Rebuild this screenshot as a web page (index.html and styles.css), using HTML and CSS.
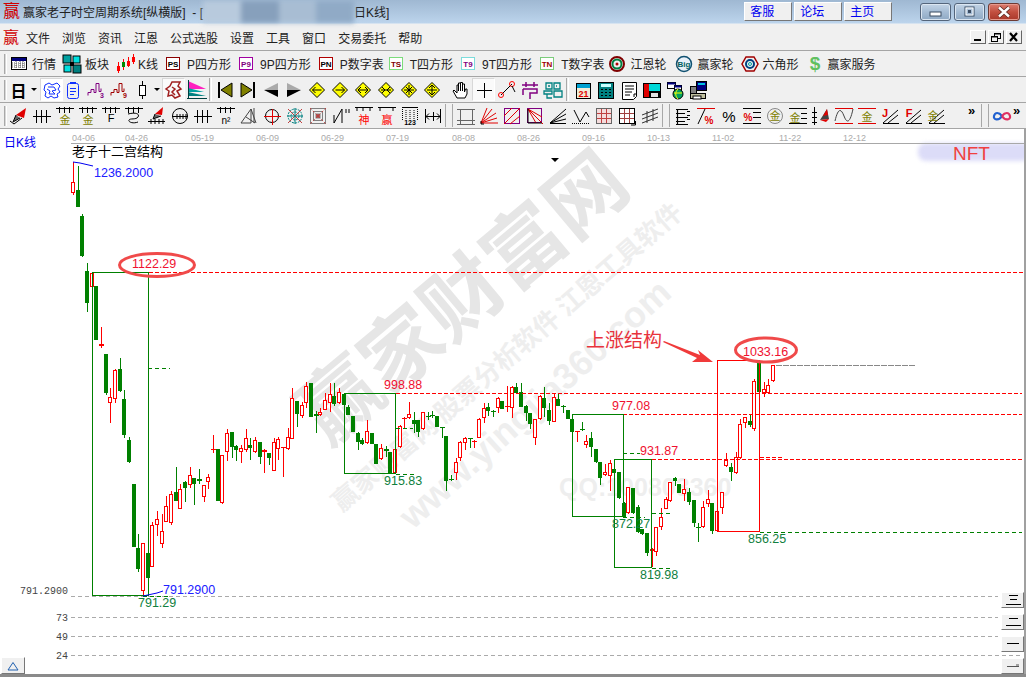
FILE: index.html
```html
<!DOCTYPE html>
<html lang="zh">
<head>
<meta charset="utf-8">
<title>赢家老子时空周期系统</title>
<link rel="stylesheet" href="styles.css">
<script src="chart.js" defer></script>
</head>
<body>
<div class="app">
  <header class="titlebar">
    <span class="logo">赢</span>
    <span class="title">赢家老子时空周期系统[纵横版]  - [</span>
    <span class="blurred"><i class="b1"></i><i class="b2"></i><i class="b3"></i><i class="b4"></i></span>
    <span class="title">日K线]</span>
    <nav class="links"><a class="link">客服</a><a class="link">论坛</a><a class="link">主页</a></nav>
    <div class="winctl">
      <span class="wbtn"><svg width="14" height="10" viewBox="0 0 14 10"><rect x="1" y="5" width="11" height="4" fill="#fff" stroke="#3b4d63"/></svg></span>
      <span class="wbtn"><svg width="14" height="12" viewBox="0 0 14 12"><rect x="2" y="1" width="9" height="9" fill="none" stroke="#3b4d63"/><rect x="3" y="2" width="7" height="7" fill="none" stroke="#fff"/><rect x="5" y="4" width="3" height="3" fill="#3b4d63"/></svg></span>
      <span class="wbtn close"><svg width="16" height="12" viewBox="0 0 16 12"><path d="M3 1.500 13 10.500M13 1.500 3 10.500" stroke="#5a2a22" stroke-width="4"/><path d="M3 1.500 13 10.500M13 1.500 3 10.500" stroke="#fff" stroke-width="2.400"/></svg></span>
    </div>
  </header>

  <div class="menubar">
    <span class="logo small">赢</span>
    <span class="mi">文件</span><span class="mi">浏览</span><span class="mi">资讯</span><span class="mi">江恩</span><span class="mi">公式选股</span><span class="mi">设置</span><span class="mi">工具</span><span class="mi">窗口</span><span class="mi">交易委托</span><span class="mi">帮助</span>
    <div class="mdi">
      <span class="mbtn"><svg width="12" height="10" viewBox="0 0 12 10"><rect x="2" y="7" width="7" height="2"/></svg></span>
      <span class="mbtn"><svg width="12" height="11" viewBox="0 0 12 11" fill="none" stroke="#000"><rect x="4.500" y="1.500" width="6" height="5"/><rect x="1.500" y="4.500" width="6" height="5" fill="#f0f0f0"/><path d="M4 2h7M1 5h7"/></svg></span>
      <span class="mbtn"><svg width="12" height="10" viewBox="0 0 12 10"><path d="M2 1 9 9M9 1 2 9" stroke="#000" stroke-width="2.200"/></svg></span>
    </div>
  </div>

  <div class="toolbar t1">
    <i class="grip"></i>
    <span class="ti"><svg class="ic" viewBox="0 0 20 20"><rect x="2.500" y="3.500" width="15" height="12" fill="#fff" stroke="#000"/><rect x="3" y="4" width="14" height="3" fill="#00007f"/><path d="M3 9h14M3 11h14M3 13h14M7 7v8M11 7v8M14 7v8" stroke="#555" stroke-dasharray="1 1"/></svg><b>行情</b></span>
    <span class="ti"><svg class="ic" viewBox="0 0 20 20"><rect x="1" y="1" width="8" height="8" fill="#00a0a0" stroke="#000"/><rect x="11" y="2" width="7" height="7" fill="#00e0e0" stroke="#000"/><rect x="2" y="11" width="7" height="7" fill="#00e0e0" stroke="#000"/><rect x="11" y="11" width="8" height="8" fill="#007f7f" stroke="#000"/><rect x="8" y="8" width="4" height="4" fill="#000"/></svg><b>板块</b></span>
    <span class="ti"><svg class="ic" viewBox="0 0 20 20" shape-rendering="crispEdges"><path d="M3 8v11M8 5v11M13 3v10M18 0v10" stroke="#f00"/><rect x="1.500" y="11.500" width="3" height="5" fill="#f00"/><rect x="6.500" y="7.500" width="3" height="5" fill="#080"/><rect x="11.500" y="6.500" width="3" height="5" fill="#f00"/><rect x="16.500" y="2.500" width="3" height="5" fill="#f00"/></svg><b>K线</b></span>
    <span class="ti"><svg class="ic" viewBox="0 0 20 20"><rect x="2.500" y="3.500" width="13" height="12" fill="#fff" stroke="#8b0000"/><text x="9" y="13" class="it8" fill="#000">PS</text></svg><b>P四方形</b></span>
    <span class="ti"><svg class="ic" viewBox="0 0 20 20"><rect x="2.500" y="3.500" width="13" height="12" fill="#fff" stroke="#a000a0"/><text x="9" y="13" class="it8" fill="#800080">P9</text></svg><b>9P四方形</b></span>
    <span class="ti tight"><svg class="ic" viewBox="0 0 20 20"><rect x="2.500" y="3.500" width="13" height="12" fill="#fff" stroke="#b00000"/><text x="9" y="13" class="it8" fill="#000">PN</text></svg><b>P数字表</b></span>
    <span class="ti"><svg class="ic" viewBox="0 0 20 20"><rect x="2.500" y="3.500" width="13" height="12" fill="#fff" stroke="#00c000" stroke-dasharray="1 1"/><text x="9" y="13" class="it8" fill="#800000">TS</text></svg><b>T四方形</b></span>
    <span class="ti"><svg class="ic" viewBox="0 0 20 20"><rect x="2.500" y="3.500" width="13" height="12" fill="#fff" stroke="#00c0c0" stroke-dasharray="1 1"/><text x="9" y="13" class="it8" fill="#800080">T9</text></svg><b>9T四方形</b></span>
    <span class="ti tight"><svg class="ic" viewBox="0 0 20 20"><rect x="2.500" y="3.500" width="13" height="12" fill="#fff" stroke="#00a000" stroke-dasharray="1 1"/><text x="9" y="13" class="it8" fill="#a00000">TN</text></svg><b>T数字表</b></span>
    <span class="ti wide"><svg class="ic" viewBox="0 0 20 20" fill="none"><circle cx="10" cy="10" r="7" stroke="#7f0000" stroke-width="2"/><circle cx="10" cy="10" r="4.500" stroke="#007f40" stroke-width="2"/><circle cx="10" cy="10" r="1.500" fill="#b00000"/></svg><b>江恩轮</b></span>
    <span class="ti"><svg class="ic" viewBox="0 0 20 20"><circle cx="10" cy="10" r="7.500" fill="#e8f0f8" stroke="#105070" stroke-width="1.500"/><text x="10" y="13" class="it8" fill="#006060">Big</text></svg><b>赢家轮</b></span>
    <span class="ti"><svg class="ic" viewBox="0 0 20 20" fill="none"><path d="M6 3h8l4 7-4 7H6l-4-7z" stroke="#a00000" stroke-width="1.500"/><circle cx="10" cy="10" r="4" stroke="#004080" stroke-width="2"/><circle cx="10" cy="10" r="1.500" stroke="#00a0a0"/></svg><b>六角形</b></span>
    <span class="ti"><svg class="ic" viewBox="0 0 20 20"><text x="10" y="16" class="itd" fill="#60c060">$</text></svg><b>赢家服务</b></span>
  </div>

  <div class="toolbar t2">
    <i class="grip"></i>
    <span class="slot narrow"><b class="ri">日</b></span><span class="drop"></span>
    <span class="slot on pull"><svg class="ic" viewBox="0 0 20 20" fill="none" stroke="#1030ff"><path d="M3 5 7 3l3 2 5-2 3 3-2 3 2 3-3 2 1 3-4 1-3-2-3 2-3-2 1-4-2-2z"/><path d="M6 7h6l2 3-4 1 3 3H7l1-3-3-2"/></svg></span>
    <span class="slot"><svg class="ic" viewBox="0 0 20 20" fill="none" stroke="#1030ff"><rect x="4.500" y="3.500" width="11" height="15" rx="2"/><path d="M7 2.500h6M7 8.500h6M7 11.500h6M7 14.500h4"/></svg></span>
    <span class="slot"><svg class="ic" viewBox="0 0 20 20" fill="none" stroke="#800080"><path d="M2 15.500v-3h3v-3h3v3h2v-9h3v8h2v-3"/><text x="16" y="18" class="it6" fill="#800080" stroke="none">3</text></svg></span>
    <span class="slot"><svg class="ic" viewBox="0 0 20 20" fill="none" stroke="#a00000"><path d="M2 15.500v-3h3v-3h3v3h2v-9h3v8h2v-3"/><text x="16" y="18" class="it6" fill="#a00000" stroke="none">9</text></svg></span>
    <span class="slot"><svg class="ic" viewBox="0 0 20 20" fill="none" stroke="#000"><path d="M10.500 1v18"/><rect x="7.500" y="5.500" width="6" height="10" fill="#fff"/></svg></span><span class="drop small"></span>
    <span class="slot on2"><svg class="ic" viewBox="0 0 20 20" fill="none" stroke="#a02020" stroke-width="1.500"><path d="M8 2h8l-2 4 3 3-4 2 3 5-5 2-3-3-4 1 1-5-3-2 4-3z"/><path d="M8 7l3 2-3 3 3 3"/></svg></span>
    <span class="slot"><svg class="ic" viewBox="0 0 20 20"><path d="M1 1 19 9H1z" fill="#ff20c0"/><path d="M1 8 17 12H1z" fill="#00a0a0"/><path d="M1 12 19 16H1z" fill="#008080"/><path d="M1.500 0v19M0 18.500h20" stroke="#004040"/></svg></span>
    <i class="sep s1"></i>
    <span class="slot"><svg class="ic" viewBox="0 0 20 20"><path d="M17 3v14L6 10z" fill="#808000" stroke="#000"/><rect x="3" y="2" width="2" height="16"/></svg></span>
    <span class="slot"><svg class="ic" viewBox="0 0 20 20"><path d="M3 3v14l11-7z" fill="#808000" stroke="#000"/><rect x="15" y="2" width="2" height="16"/></svg></span>
    <span class="slot"><svg class="ic" viewBox="0 0 20 20"><path d="M17 3v7H3z" fill="#aaa"/><path d="M17 17v-7H3z"/></svg></span>
    <span class="slot"><svg class="ic" viewBox="0 0 20 20"><path d="M3 3v7h14z" fill="#aaa"/><path d="M3 17v-7h14z"/></svg></span>
    <span class="slot"><svg class="ic" viewBox="0 0 20 20"><path d="M10 2.500 17.500 10 10 17.500 2.500 10z" fill="#ff0" stroke="#000"/><path d="M5.500 10h9M5.500 10l3-3M5.500 10l3 3" fill="none" stroke="#000"/></svg></span>
    <span class="slot"><svg class="ic" viewBox="0 0 20 20"><path d="M10 2.500 17.500 10 10 17.500 2.500 10z" fill="#ff0" stroke="#000"/><path d="M5.500 10h9M14.500 10l-3-3M14.500 10l-3 3" fill="none" stroke="#000"/></svg></span>
    <span class="slot"><svg class="ic" viewBox="0 0 20 20"><path d="M10 2.500 17.500 10 10 17.500 2.500 10z" fill="#ff0" stroke="#000"/><path d="M5 10h10M5 10l3-3M5 10l3 3M15 10l-3-3M15 10l-3 3" fill="none" stroke="#000"/></svg></span>
    <span class="slot"><svg class="ic" viewBox="0 0 20 20"><path d="M10 2.500 17.500 10 10 17.500 2.500 10z" fill="#ff0" stroke="#000"/><path d="M5 10h10M9 10l-3-3M9 10l-3 3M11 10l3-3M11 10l3 3" fill="none" stroke="#000"/></svg></span>
    <span class="slot"><svg class="ic" viewBox="0 0 20 20"><path d="M10 2.500 17.500 10 10 17.500 2.500 10z" fill="#ff0" stroke="#000"/><path d="M5 10h10M10 5v10M7 7l6 6M13 7l-6 6" fill="none" stroke="#000"/></svg></span>
    <span class="slot"><svg class="ic" viewBox="0 0 20 20"><path d="M10 2.500 17.500 10 10 17.500 2.500 10z" fill="#ff0" stroke="#000"/><path d="M5 10h10M10 5v10M10 5l-3 3M10 5l3 3M10 15l-3-3M10 15l3-3" fill="none" stroke="#000"/></svg></span>
    <i class="gap6"></i>
    <span class="slot"><svg class="ic" viewBox="0 0 20 20" fill="#fff" stroke="#000"><path d="M6 18 2 11l1-1 3 3V5h1.500v6V3h2v8V2.500h2V11V4h2v8l1-3h1.500v5l-2 4z"/></svg></span>
    <span class="slot on3"><svg class="ic" viewBox="0 0 20 20"><path d="M10.500 3v15M3 10.500h15" stroke="#000"/></svg></span>
    <span class="slot"><svg class="ic" viewBox="0 0 20 20" fill="none"><path d="M4 15 15 4" stroke="#000"/><circle cx="4" cy="15" r="2.500" stroke="#f00"/><circle cx="15" cy="4" r="2.500" stroke="#f00"/><path d="M15 6l3 6" stroke="#000"/></svg></span>
    <span class="slot"><svg class="ic" viewBox="0 0 20 20" fill="none" stroke="#800080" stroke-width="1.500"><path d="M6 2v5M14 2v5M2 5h16M3 9h14v4h-7v6M3 9v6"/></svg></span>
    <span class="slot"><svg class="ic" viewBox="0 0 20 20" fill="none" stroke="#008080" stroke-width="1.300"><path d="M3 3h6v6H3zM11 3h6v6h-6zM1 11h8v3H1zM11 11h8v6h-8zM4 14v4h5M7 6h-2M14 6h-1"/></svg></span>
    <i class="sep s2"></i>
    <span class="slot"><svg class="ic" viewBox="0 0 20 20"><rect x="3.500" y="3.500" width="14" height="15" fill="#f0ecd8" stroke="#000"/><rect x="4" y="4" width="13" height="4" fill="#00a0d0"/><text x="10.500" y="17" class="it9" fill="#e00000">21</text></svg></span>
    <span class="slot"><svg class="ic" viewBox="0 0 20 20"><rect x="2.500" y="2.500" width="15" height="16" fill="#008080" stroke="#000"/><rect x="5" y="4" width="10" height="3" fill="#c8ffff"/><path d="M5 9.500h2M9 9.500h2M13 9.500h2M5 12.500h2M9 12.500h2M13 12.500h2M5 15.500h2M9 15.500h2M13 15.500h2" stroke="#000"/></svg></span>
    <span class="slot"><svg class="ic" viewBox="0 0 20 20" fill="none" stroke="#000"><path d="M3.500 2.500h14v14l-3 3h-11z" fill="#fff"/><path d="M6 6h9M6 9h9M6 12h7M6 15h5M15 17v-3h3" /></svg></span>
    <span class="slot"><svg class="ic" viewBox="0 0 20 20"><rect x="1" y="3" width="18" height="15" fill="#000"/><rect x="2" y="4" width="5" height="13" fill="#e00000"/><rect x="7" y="4" width="11" height="7" fill="#00d8d8"/><rect x="9" y="13" width="7" height="4" fill="#e0e0e0"/></svg></span>
    <span class="slot"><svg class="ic" viewBox="0 0 20 20"><rect x="2.500" y="2.500" width="8" height="6" fill="#fff" stroke="#000"/><rect x="2.500" y="2.500" width="8" height="2" fill="#00007f"/><rect x="9.500" y="5.500" width="7" height="5" fill="#fff" stroke="#000"/><rect x="9.500" y="5.500" width="7" height="2" fill="#00007f"/><circle cx="13" cy="14" r="5" fill="#00a060" stroke="#000"/><path d="M9 13h8M13 9c-3 3-3 7 0 10" fill="none" stroke="#ff0"/></svg></span>
    <span class="slot"><svg class="ic" viewBox="0 0 20 20"><rect x="8.500" y="1.500" width="10" height="9" fill="#00007f" stroke="#000"/><rect x="10" y="3" width="7" height="2" fill="#00c0e0"/><rect x="2.500" y="6.500" width="6" height="7" fill="#808080" stroke="#000"/><rect x="2.500" y="13.500" width="15" height="5" fill="#c0c0a0" stroke="#000"/><rect x="5" y="16" width="8" height="3" fill="#fff" stroke="#000"/></svg></span>
  </div>

  <div class="toolbar t3">
    <i class="grip"></i>
    <span class="slot"><svg class="ic" viewBox="0 0 20 20"><path d="M17 2 15 12 7 9z" fill="#e00000"/><path d="M7 9 4 16l7-4" fill="#666" stroke="#000"/><path d="M1 15l4 3 8-6" fill="none" stroke="#000"/></svg></span>
    <span class="slot"><svg class="ic" viewBox="0 0 20 20"><use href="#hash"/></svg></span>
    <span class="slot"><svg class="ic" viewBox="0 0 20 20"><use href="#ticks"/><text x="10" y="18" class="itk" fill="#808000">金</text></svg></span>
    <span class="slot"><svg class="ic" viewBox="0 0 20 20"><use href="#ticks"/><text x="10" y="18" class="itk" fill="#808000">金</text></svg></span>
    <span class="slot"><svg class="ic" viewBox="0 0 20 20"><use href="#ticks"/><text x="10" y="16" class="itk" fill="#000">F</text></svg></span>
    <span class="slot"><svg class="ic" viewBox="0 0 20 20"><use href="#ticks"/><path d="M4 8c8-2 12 0 10 3s-8 1-9 3 4 4 9 2" fill="none" stroke="#000"/></svg></span>
    <span class="slot"><svg class="ic" viewBox="0 0 20 20"><path d="M16 1 15 9 8 8z" fill="#e00000"/><path d="M8 8 6 13l8-3" fill="#666" stroke="#000"/><path d="M1 15.500h17M4 13v5M8 13v5M12 13v5M16 13v5" stroke="#000" fill="none"/></svg></span>
    <span class="slot"><svg class="ic" viewBox="0 0 20 20" fill="none" stroke="#000"><circle cx="10" cy="10" r="7.500"/><path d="M2 10.500h16M7 8v5M10 8v5M13 8v5M16 8v5"/></svg></span>
    <span class="slot"><svg class="ic" viewBox="0 0 20 20"><use href="#hash"/></svg></span>
    <span class="slot"><svg class="ic" viewBox="0 0 20 20"><use href="#ticks"/><text x="10" y="18" class="it10" fill="#000">n²</text></svg></span>
    <span class="slot"><svg class="ic" viewBox="0 0 20 20" fill="none" stroke="#444"><path d="M2 17 12 3v14zM7 11l9 6M12 3l5 14M15 2v15"/></svg></span>
    <span class="slot"><svg class="ic" viewBox="0 0 20 20" fill="none"><circle cx="10" cy="10" r="6.500" stroke="#000"/><path d="M2 10.500h17M10.500 3v16" stroke="#e00000"/></svg></span>
    <span class="slot"><svg class="ic" viewBox="0 0 20 20" fill="none" stroke="#008080"><circle cx="10" cy="10" r="7" stroke-dasharray="2 1"/><circle cx="10" cy="10" r="4" stroke-dasharray="2 1"/><path d="M3 3l14 14M17 3 3 17" stroke="#c04040"/><path d="M10 2v16M2 10h16"/></svg></span>
    <span class="slot"><svg class="ic" viewBox="0 0 20 20" fill="none" stroke="#808080"><rect x="2.500" y="2.500" width="15" height="15"/><rect x="5.500" y="5.500" width="9" height="9"/><rect x="8" y="8" width="4" height="4" fill="#c04040"/><path d="M2 2l16 16M18 2 2 18" stroke="#c04040" stroke-dasharray="2 2"/></svg></span>
    <span class="slot"><svg class="ic" viewBox="0 0 20 20" fill="none" stroke="#000"><path d="M3 17V9M3 17 11 3v14M15 3v4M18 3v4"/></svg></span>
    <span class="slot"><svg class="ic" viewBox="0 0 20 20"><path d="M1 1.500h18M3 1v4M9 1v4M16 1v4" stroke="#000"/><text x="10" y="18" class="itk" fill="#f00">神</text></svg></span>
    <span class="slot"><svg class="ic" viewBox="0 0 20 20"><path d="M1 1.500h18M3 1v4M16 1v4" stroke="#000"/><text x="10" y="18" class="itk" fill="#f00">赢</text></svg></span>
    <span class="slot"><svg class="ic" viewBox="0 0 20 20" fill="none" stroke="#000"><path d="M2.500 1v13M17.500 1v13M6 4v10M10 4v10M14 4v10" stroke-dasharray="1 1"/><path d="M2 1.500h16"/><text x="10" y="19" class="it6" fill="#000" stroke="none">123</text></svg></span>
    <span class="slot"><svg class="ic" viewBox="0 0 20 20" fill="none" stroke="#000"><path d="M2.500 3v14M17.500 3v14M3 10.500h14M3 10.500l3-3M3 10.500l3 3M17 10.500l-3-3M17 10.500l-3 3M10.500 6v9"/></svg></span>
    <i class="sep gripped"></i>
    <span class="slot"><svg class="ic" viewBox="0 0 20 20" fill="none" stroke="#666"><path d="M1 3.500h18M4.500 4v14M16.500 4v14M1 14.500h18M1 18.500h18"/></svg></span>
    <span class="slot"><svg class="ic" viewBox="0 0 20 20" fill="none" stroke="#e00000"><path d="M2 17 8 2M2 17 13 3M2 17 17 7M2 17l16-5M2 17h17"/><path d="M2 15v3h3" stroke="#000"/></svg></span>
    <span class="slot"><svg class="ic" viewBox="0 0 20 20" fill="none"><rect x="2.500" y="2.500" width="15" height="15" stroke="#800080"/><path d="M2 18 18 2M8 18l10-8M2 10 10 2" stroke="#e00000"/></svg></span>
    <span class="slot"><svg class="ic" viewBox="0 0 20 20" fill="none"><rect x="2.500" y="2.500" width="14" height="14" stroke="#800080"/><path d="M3 3 18 18M3 3l14 8M3 3l8 14M3 3l12 12" stroke="#e00000"/><path d="M3 3v14h14" stroke="#000"/></svg></span>
    <span class="slot"><svg class="ic" viewBox="0 0 20 20" fill="none" stroke="#000"><path d="M2 17 18 3M2 17 18 8M2 17 18 13M2 17.500h16"/></svg></span>
    <span class="slot"><svg class="ic" viewBox="0 0 20 20" fill="none" stroke="#000"><path d="M3 4l6 12 6-10 3 5"/><path d="M1 17.500h18" stroke-dasharray="1 1"/></svg></span>
    <span class="slot"><svg class="ic" viewBox="0 0 20 20"><rect x="2.500" y="2.500" width="15" height="15" fill="#f4dcdc" stroke="#666"/><path d="M7.500 3v14M12.500 3v14M3 7.500h14M3 12.500h14" stroke="#c04040"/></svg></span>
    <span class="slot"><svg class="ic" viewBox="0 0 20 20"><rect x="2.500" y="2.500" width="15" height="15" fill="#fff" stroke="#000"/><path d="M7.500 3v14M12.500 3v14M3 7.500h14M3 12.500h14" stroke="#a04040"/><path d="M18.500 15v4H14" fill="none" stroke="#000"/></svg></span>
    <span class="slot"><svg class="ic" viewBox="0 0 20 20" fill="none" stroke="#333"><path d="M2 9 18 3M2 13 18 7M2 17 18 11M7 5v12M13 3v12"/></svg></span>
    <i class="sep gripped"></i>
    <span class="slot"><svg class="ic" viewBox="0 0 20 20" fill="none" stroke="#000"><path d="M4.500 3v15M3 3.500h12M3 7.500h9M3 11.500h12M3 15.500h9M3 18.500h12M14 5.500h3M14 9.500h3M14 13.500h3" stroke-width="1.200"/></svg></span>
    <span class="slot"><svg class="ic" viewBox="0 0 20 20"><path d="M1 2.500h18" stroke="#e00000"/><path d="M2 18 9 3" stroke="#000" fill="none"/><text x="13" y="18" class="itp" fill="#e00000">%</text></svg></span>
    <span class="slot"><svg class="ic" viewBox="0 0 20 20"><text x="10" y="16" class="itq" fill="#000">%</text></svg></span>
    <span class="slot"><svg class="ic" viewBox="0 0 20 20"><path d="M1 2.500h18M11 6.500h8M11 11.500h8M1 17.500h18" stroke="#000"/><text x="6" y="15" class="itp" fill="#e00000">%</text></svg></span>
    <span class="slot"><svg class="ic" viewBox="0 0 20 20"><circle cx="10" cy="10" r="7.500" fill="none" stroke="#888"/><text x="10" y="14" class="itk" fill="#808000">金</text></svg></span>
    <span class="slot"><svg class="ic" viewBox="0 0 20 20"><path d="M1 2.500h18M13 7.500h6M13 12.500h6M1 17.500h18" stroke="#000"/><text x="7" y="16" class="itk" fill="#808000">金</text></svg></span>
    <span class="slot"><svg class="ic" viewBox="0 0 20 20"><path d="M3.500 1v18M1 6.500h5M1 11.500h5M1 16.500h5" stroke="#000"/><path d="M16 3 18 13 9 14z" fill="#444"/><path d="M16 3l1 6-5 1z" fill="#e00000"/><path d="M9 14l9-1-3 3z" fill="#e00000"/></svg></span>
    <span class="slot"><svg class="ic" viewBox="0 0 20 20" fill="none"><path d="M1 2.500h18M1 17.500h18" stroke="#e00000"/><path d="M1 15C4 2 7 2 10 10s6 7 9-7" stroke="#444"/></svg></span>
    <span class="slot"><svg class="ic" viewBox="0 0 20 20"><path d="M1 2.500h18M1 17.500h18" stroke="#e00000"/><text x="10" y="15" class="itk" fill="#808000">金</text></svg></span>
    <span class="slot"><svg class="ic" viewBox="0 0 20 20"><path d="M3 17 18 4M3 17.500h16M8 17 18 9" stroke="#000" fill="none"/><text x="5" y="11" class="itj" fill="#e00000">J</text></svg></span>
    <span class="slot"><svg class="ic" viewBox="0 0 20 20"><path d="M3 17 18 4M3 17.500h16M8 17 18 9" stroke="#000" fill="none"/><text x="6" y="11" class="itj" fill="#e00000">F</text></svg></span>
    <span class="slot"><svg class="ic" viewBox="0 0 20 20"><path d="M3 17 18 4M3 17.500h16M8 17 18 9" stroke="#000" fill="none"/><text x="7" y="14" class="itk" fill="#808000">金</text></svg></span>
    <span class="more first">»</span>
    <i class="sep gripped"></i>
    <span class="slot"><svg class="ic" viewBox="0 0 20 20" fill="none" stroke-width="2.200"><path d="M10 10C7 6 3 6 2 10s5 5 8 0" stroke="#2060d0"/><path d="M10 10c3-4 7-4 8 0s-5 5-8 0" stroke="#e03060"/></svg></span>
    <span class="more">»</span>
  </div>

  <main class="chart">
    <svg class="plot" id="plot" viewBox="0 129 1024 545" width="1024" height="545" xmlns="http://www.w3.org/2000/svg">
      <defs>
        <g id="hash" stroke="#000"><path d="M1 10.500h18M4.500 4v13M9.500 4v13M14.500 4v13"/></g>
        <g id="ticks" stroke="#000"><path d="M1 2.500h18M4.500 1v6M9.500 1v6M14.500 1v6"/></g>
      </defs>

      <rect class="nft-bg" x="918" y="143" width="112" height="18" rx="8"/>
      <text class="nft" x="953" y="160">NFT</text>

      <g class="wm">
        <text class="wm-big" transform="translate(481 319) rotate(-40)">赢家财富网</text>
        <text class="wm-mid" transform="translate(513 364) rotate(-41)">赢家财富网 股票分析软件 江恩工具软件</text>
        <text class="wm-url" transform="translate(543 413) rotate(-42)">www.yingjia360.com</text>
        <text class="wm-qq" x="559" y="496">QQ:100803360</text>
      </g>

      <g class="grid">
        <path d="M71 596.500H998M71 617.500H998M71 636.500H998M71 655.500H1023"/>
      </g>
      <path class="axis" d="M71 143.500H1024"/>
      <g class="dates">
        <text x="72" y="141">04-06</text><text x="125" y="141">04-26</text><text x="191" y="141">05-19</text><text x="256" y="141">06-09</text><text x="321" y="141">06-29</text><text x="386" y="141">07-19</text><text x="452" y="141">08-08</text><text x="517" y="141">08-26</text><text x="582" y="141">09-16</text><text x="647" y="141">10-13</text><text x="712" y="141">11-02</text><text x="779" y="141">11-22</text><text x="843" y="141">12-12</text>
      </g>

      <text class="period" x="4" y="147">日K线</text>
      <text class="heading" x="72" y="156">老子十二宫结构</text>
      <path class="marker" d="M551 158h8l-4 4z"/>

      <g class="scale">
        <text x="68" y="594">791.2900</text><text x="68" y="621">73</text><text x="68" y="640">49</text><text x="68" y="659">24</text>
      </g>

      <g id="candles"></g>

      <g class="red-dash">
        <path d="M149 272.500H1024M396 393.500H1022M623 414.500H1022M652 459.500H1024M760 457.500H782"/>
      </g>
      <path class="grey-dash" d="M776 365.500H915"/>
      <g class="green-dash">
        <path d="M148 368.500H170M143 596.500H170M396 428.500H413M396 474.500H417M623 453.500H640M623 517.500H645M652 513.500H673M652 568.500H673M760 532.500H1022"/>
      </g>
      <g class="box-g">
        <path d="M92.500 272.500H148.500V595.500H92.500Z"/>
        <path d="M344.500 393.500H395.500V473.500H344.500Z"/>
        <path d="M572.500 414.500H623.500V516.500H572.500Z"/>
        <path d="M614.500 459.500H651.500V567.500H614.500Z"/>
      </g>
      <path class="box-r" d="M717.500 360.500H759.500V531.500H717.500Z"/>

      <path class="blue-line" d="M73 162 80 163 93 166M143 596 157 593 163 591"/>
      <g class="blue">
        <text x="94" y="177">1236.2000</text><text x="163" y="594">791.2900</text>
      </g>
      <g class="val-r">
        <text x="132" y="268">1122.29</text><text x="384" y="389">998.88</text><text x="612" y="410">977.08</text><text x="640" y="455">931.87</text><text x="743" y="356">1033.16</text>
      </g>
      <g class="val-g">
        <text x="384" y="485">915.83</text><text x="612" y="528">872.27</text><text x="640" y="579">819.98</text><text x="748" y="543">856.25</text><text x="138" y="607">791.29</text>
      </g>
      <ellipse class="oval" cx="157" cy="265" rx="37.500" ry="11.500"/>
      <ellipse class="oval" cx="766" cy="350" rx="30.500" ry="12"/>
      <text class="note" x="586" y="347">上涨结构</text>
      <path class="arrow" d="M664 341 700 355 698 350 713 362 692 362 697 358 663 342Z"/>
    </svg>

    <div class="zoombtns">
      <span class="zb"><svg width="18" height="12" viewBox="0 0 18 12"><path d="M5 1.500h9M6 5.500h7M2 10.500h15" stroke="#000"/></svg></span>
      <span class="zb"><svg width="18" height="12" viewBox="0 0 18 12"><path d="M5 2.500h9M2 9.500h15" stroke="#000"/></svg></span>
      <span class="zb"><svg width="18" height="12" viewBox="0 0 18 12"><path d="M3 5.500h12" stroke="#000"/></svg></span>
      <span class="zb"><svg width="18" height="12" viewBox="0 0 18 12"><path d="M3 6.500h12M12 5h3" stroke="#555"/></svg></span>
    </div>
    <span class="upbtn"><svg width="12" height="10" viewBox="0 0 12 10"><path d="M6 1.500 11 9H1Z" fill="none" stroke="#2060b0"/></svg></span>
  </main>
  <footer class="statusline"></footer>
</div>
</body>
</html>
```
FILE: styles.css
```css
* { box-sizing: border-box; }
html, body { margin: 0; padding: 0; height: 100%; background: #fff; overflow: hidden; }
body { font-family: "Liberation Sans", "Noto Sans CJK SC", sans-serif; font-size: 12px; color: #222; }
.app { width: 1026px; height: 677px; display: flex; flex-direction: column; }

.titlebar { height: 24px; display: flex; align-items: center; background: linear-gradient(#9fb8d2, #bcd4ec); padding-left: 3px; border-bottom: 1px solid #d6e3f0; }
.logo { color: #d00000; font-size: 17px; line-height: 17px; width: 20px; font-weight: 400; }
.logo.small { width: 23px; font-size: 16px; }
.title { font-size: 12px; white-space: pre; color: #222; }
.blurred { display: flex; width: 151px; height: 22px; filter: blur(2.500px); }
.blurred i { flex: 1; background: #8fa8c4; }
.blurred .b1 { background: #b8cadd; }
.blurred .b2 { background: #87a0bc; }
.blurred .b3 { background: #a8bdd3; }
.blurred .b4 { background: #90aac6; }
.links { margin-left: 355px; display: flex; gap: 2px; }
.link { width: 48px; height: 19px; padding: 0 0 0 5px; line-height: 18px; color: #0000f0; background: #f0f0f0; border: 1px solid; border-color: #fff #777 #777 #fff; }
.winctl { margin-left: 28px; display: flex; gap: 3px; }
.wbtn { width: 31px; height: 18px; display: flex; align-items: center; justify-content: center; border: 1px solid #54657b; border-radius: 3px; background: linear-gradient(#c3d4e6, #a5bcd4 50%, #8fa9c4); box-shadow: inset 0 0 0 1px #dbe6f1; }
.wbtn.close { width: 32px; background: linear-gradient(#dc7e70, #c24f3f 50%, #a9382a); border-color: #6d3a33; box-shadow: inset 0 0 0 1px #e69a8e; }

.menubar { height: 27px; display: flex; align-items: center; background: #f0f0f0; padding-left: 3px; border-bottom: 1px solid #a5a5a5; }
.mi { margin-right: 12px; font-size: 12px; white-space: nowrap; }
.mdi { margin-left: auto; margin-right: 4px; display: flex; gap: 2px; }
.mbtn { width: 16px; height: 14px; display: flex; align-items: center; justify-content: center; background: #f0f0f0; border: 1px solid; border-color: #fff #666 #666 #fff; }

.toolbar { display: flex; align-items: center; background: #f0f0f0; border-bottom: 1px solid #a5a5a5; padding-left: 4px; height: 26px; }
.grip { width: 3px; height: 20px; border-left: 1px solid #a8a8a8; border-right: 1px solid #fff; background: #d8d8d8; flex: none; }
.ic { width: 20px; height: 20px; display: block; flex: none; }
.ti { display: flex; align-items: center; padding-right: 6px; white-space: nowrap; }
.ti.tight { padding-right: 3px; }
.ti.wide { padding-right: 8px; }
.t1 .grip + .ti { margin-left: 2px; }
.ti b { font-weight: 400; font-size: 12px; margin-left: 3px; color: #222; }
.slot { width: 23px; height: 23px; display: flex; align-items: center; justify-content: center; flex: none; }
.t2 .grip + .slot { margin-left: 2px; }
.slot.narrow { width: 19px; }
.slot.pull { margin-right: -2px; }
.ri { font-size: 16px; font-weight: 700; color: #000; }
.drop { width: 12px; height: 23px; display: flex; align-items: center; justify-content: center; flex: none; }
.drop.small { width: 8px; margin-right: 1px; }
.drop::before { content: ""; border: 3px solid transparent; border-top: 3px solid #000; border-bottom: 0; }
.on, .on2, .on3 { border: 1px solid; border-color: #d8d8d8 #fff #fff #d8d8d8; background: #fff; }
.on2, .on3 { background: #fafafa; }
.sep { width: 3px; height: 23px; flex: none; border-left: 1px solid #a8a8a8; border-right: 1px solid #fff; }
.sep.s1 { margin: 0 1px; }
.sep.s2 { margin: 0 2px; }
.sep.gripped { width: 8px; margin: 0 1px; border-right: 1px solid #a8a8a8; border-left: 1px solid #a8a8a8; background: #f0f0f0; }
.gap6 { width: 6px; flex: none; }
.more { font-size: 13px; font-weight: 700; color: #000; width: 12px; align-self: flex-start; margin-top: 1px; line-height: 14px; flex: none; }
.more.first { margin-left: 21px; }

.it6 { font: 700 7px "Liberation Sans", sans-serif; text-anchor: middle; }
.it8 { font: 700 8px "Liberation Sans", sans-serif; text-anchor: middle; }
.it9 { font: 700 9px "Liberation Sans", sans-serif; text-anchor: middle; }
.it10 { font: 400 10px "Liberation Sans", sans-serif; text-anchor: middle; }
.itd { font: 700 19px "Liberation Sans", sans-serif; text-anchor: middle; }
.itk { font: 400 11px "Liberation Sans", "Noto Sans CJK SC", sans-serif; text-anchor: middle; }
.itp { font: 700 10px "Liberation Sans", sans-serif; text-anchor: middle; }
.itq { font: 400 15px "Liberation Sans", sans-serif; text-anchor: middle; }
.itj { font: 700 11px "Liberation Sans", sans-serif; text-anchor: middle; }

.chart { flex: 1; position: relative; min-height: 0; background: #fff; border-right: 2px solid #a0a0a0; }
.plot { display: block; }
.statusline { height: 3px; background: #8a8a8a; flex: none; }

.zoombtns { position: absolute; right: 0; top: 463px; display: flex; flex-direction: column; gap: 6px; }
.zb { width: 23px; height: 16px; display: flex; align-items: center; justify-content: center; background: #f0f0f0; border: 1px solid; border-color: #fff #777 #777 #fff; }
.upbtn { position: absolute; left: 1px; top: 528px; width: 24px; height: 17px; display: flex; align-items: center; justify-content: center; background: #f0f0f0; border: 1px solid; border-color: #fff #777 #777 #fff; }

.nft-bg { fill: #dcdcf8; filter: blur(2px); }
.nft { font: 400 19px "Liberation Sans", sans-serif; fill: #f04040; }
.wm text { fill: #eeeeee; text-anchor: middle; font-weight: 700; }
.wm .wm-big { font: 700 80px "Noto Sans CJK SC", sans-serif; fill: #e6e6e6; }
.wm .wm-mid { font: 700 26px "Noto Sans CJK SC", sans-serif; }
.wm .wm-url { font: 700 36px "Liberation Sans", sans-serif; }
.wm .wm-qq { font: 700 25px "Liberation Sans", sans-serif; text-anchor: start; }

.grid path { stroke: #aaa; fill: none; stroke-dasharray: 4 3; shape-rendering: crispEdges; }
.axis { stroke: #a8a8a8; fill: none; shape-rendering: crispEdges; }
.dates text { font: 400 9px "Liberation Sans", sans-serif; fill: #aaa; }
.period { font: 400 12px "Liberation Sans", "Noto Sans CJK SC", sans-serif; fill: #0000f0; }
.heading { font: 400 13px "Liberation Sans", "Noto Sans CJK SC", sans-serif; fill: #000; }
.marker { fill: #000; }
.scale text { font: 400 10px "Liberation Mono", monospace; fill: #444; text-anchor: end; }
.red-dash path { stroke: #f00; fill: none; stroke-dasharray: 4 2; shape-rendering: crispEdges; }
.grey-dash { stroke: #888; fill: none; stroke-dasharray: 6 1; shape-rendering: crispEdges; }
.green-dash path { stroke: #008000; fill: none; stroke-dasharray: 4 3; shape-rendering: crispEdges; }
.box-g path { stroke: #008000; fill: none; shape-rendering: crispEdges; }
.box-r { stroke: #f00; fill: none; shape-rendering: crispEdges; }
.blue-line { stroke: #0000f0; fill: none; }
.blue text { font: 400 12.500px "Liberation Sans", sans-serif; fill: #2020ff; }
.val-r text { font: 400 12.500px "Liberation Sans", sans-serif; fill: #f01030; }
.val-g text { font: 400 12.500px "Liberation Sans", sans-serif; fill: #108040; }
.oval { fill: none; stroke: #f04a4a; stroke-width: 3; }
.note { font: 400 19px "Liberation Sans", "Noto Sans CJK SC", sans-serif; fill: #e8333c; }
.arrow { fill: #f03a3a; }
```
FILE: chart.js
```js
// Candle data: [x, wick top, body top, body bottom, wick bottom, rising?]
// Each group has an origin and a scale, since the series was read in three stretches.
const groups = [
  { ox: 0, oy: 0, k: 1, c: [
    [73,162,182,193,195,1],[78,166,190,207,207,0],[82,214,216,256,257,0],[87,263,271,303,312,0],[92,273,273,287,287,1],
    [96,286,286,340,340,0],[101,327,344,346,348,1],[106,354,354,393,395,0],[110,388,397,403,423,1],[115,369,370,399,403,1],
    [120,358,369,391,392,0],[124,390,399,435,438,0],[129,437,440,462,463,0],[134,484,484,547,547,0],[138,534,548,569,572,0],
    [143,543,543,591,595,1],[148,553,553,578,578,0],[152,522,525,567,567,1],[157,511,519,525,536,1],[162,514,531,544,548,1],
    [166,496,506,522,522,1],[171,491,494,523,525,1],[176,467,492,501,501,0],[180,484,489,509,509,1],[185,481,482,488,502,0],
    [190,467,475,485,488,1],[194,478,478,484,505,0],[199,469,479,481,484,0],[204,485,485,497,502,1],[208,474,477,482,489,1],
    [213,435,449,450,453,1],[218,449,449,501,501,0],[222,455,455,503,504,1],[227,429,433,452,461,1],[232,432,432,447,458,0],
    [236,445,446,450,461,0],[241,445,448,452,463,1],[246,429,438,450,452,1],[250,438,445,448,460,0],[255,437,440,452,453,1],
    [260,442,442,457,464,0],[264,449,450,452,473,1],[269,453,453,458,465,0],[274,438,442,471,471,1],[278,437,439,449,460,1],
    [283,447,447,448,477,1],[288,428,437,449,450,1],[292,388,398,439,439,1],[297,401,401,414,427,0],[302,402,405,416,418,1],
    [306,382,386,403,408,1],[311,383,383,417,417,0],[316,411,414,416,433,0],[320,408,412,415,416,1],[325,393,400,410,410,1],
    [330,383,394,403,412,1],[334,383,396,404,406,0],[339,388,392,403,404,1]
  ]},
  { ox: 340, oy: 370, k: 1 / 3, c: [
    [12,72,72,105,105,0],[24,105,110,135,135,0],[38,137,137,185,185,0],[53,185,190,215,240,0],[66,205,210,222,225,0],
    [81,150,184,220,222,1],[96,190,190,222,222,0],[108,222,222,281,283,0],[123,222,235,268,270,1],[137,228,238,242,262,0],
    [150,246,246,310,310,0],[165,238,238,310,312,1],[180,165,167,230,233,1],[192,140,145,147,175,1],[207,97,133,143,147,1],
    [222,125,150,162,190,0],[234,150,150,185,200,0],[249,127,127,176,180,1],[264,125,138,142,150,0],[276,123,135,139,145,0],
    [291,137,137,170,172,0],[306,170,172,175,205,0],[318,198,198,332,363,0],[333,315,326,329,333,0],[348,265,277,310,330,1],
    [360,213,217,263,272,1],[375,200,203,220,240,1],[390,205,205,208,235,0],[402,210,212,214,235,1],[417,145,147,203,205,1],
    [432,100,115,143,158,1],[444,100,112,122,137,0],[459,120,122,125,140,0],[474,82,85,115,128,1],[486,93,93,117,117,0],
    [501,47,108,112,125,1],[516,48,50,113,143,1],[528,40,52,70,72,0],[543,40,67,110,110,0],[558,105,108,130,152,0],
    [570,130,130,162,178,0],[585,148,148,203,225,1],[600,75,77,148,150,1],[612,52,85,113,140,0],[627,100,120,152,165,0],
    [642,72,82,155,157,1],[654,72,88,107,107,0],[669,105,107,110,130,0],[684,120,120,147,147,0],[696,147,147,185,187,0],
    [711,182,183,186,215,1],[726,155,176,180,183,0],[738,195,213,224,233,1],[753,185,205,232,262,0],[768,238,238,276,278,0],
    [780,276,276,323,345,0],[795,283,307,316,318,1],[810,270,280,317,362,1],[822,298,298,308,310,0],[837,307,307,385,388,0],
    [852,395,400,440,443,0],[864,350,350,430,432,1],[879,355,355,430,432,0],[894,405,410,485,490,0],[906,478,478,493,495,0],
    [921,490,490,548,557,0],[936,535,538,543,592,1],[948,472,472,545,557,1],[963,415,442,472,480,1],[978,380,388,416,418,1],
    [990,337,337,392,395,1],[1005,322,325,332,347,0],[1017,342,342,368,368,0]
  ]},
  { ox: 680, oy: 330, k: 1 / 3, c: [
    [12,447,478,493,513,1],[27,475,487,515,525,0],[42,510,510,578,590,0],[54,578,591,595,635,0],[69,513,532,592,594,1],
    [84,480,508,523,530,1],[96,519,519,603,612,0],[111,544,544,603,605,1],[126,485,485,535,552,1],[138,370,391,409,411,1],
    [153,400,412,425,452,0],[168,365,380,430,432,1],[180,267,283,385,387,1],[195,262,262,280,295,1],[210,255,274,284,290,0],
    [222,148,153,298,302,1],[237,100,100,185,187,0],[252,155,176,188,200,1],[264,148,166,190,193,1],[279,106,106,154,156,1]
  ]}
];

const NS = 'http://www.w3.org/2000/svg';
const layer = document.getElementById('candles');
layer.setAttribute('shape-rendering', 'crispEdges');

function add(tag, attrs) {
  const el = document.createElementNS(NS, tag);
  for (const key in attrs) el.setAttribute(key, attrs[key]);
  layer.appendChild(el);
}

for (const g of groups) {
  for (const [zx, wt, bt, bb, wb, up] of g.c) {
    const x = Math.round(g.ox + zx * g.k);
    const [wickTop, top, bottom, wickBottom] = [wt, bt, bb, wb].map(v => Math.round(g.oy + v * g.k));
    const colour = up ? '#ff0000' : '#008000';
    add('rect', { x: x, y: wickTop, width: 1, height: Math.max(1, wickBottom - wickTop), fill: colour });
    const h = bottom - top;
    if (h <= 2) {
      add('rect', { x: x - 2, y: top, width: 5, height: Math.max(1, h), fill: colour });
    } else if (up) {
      add('rect', { x: x - 1.5, y: top + 0.5, width: 3, height: h - 1, fill: '#ffffff', stroke: colour });
    } else {
      add('rect', { x: x - 2, y: top, width: 4, height: h, fill: colour });
    }
  }
}
```
